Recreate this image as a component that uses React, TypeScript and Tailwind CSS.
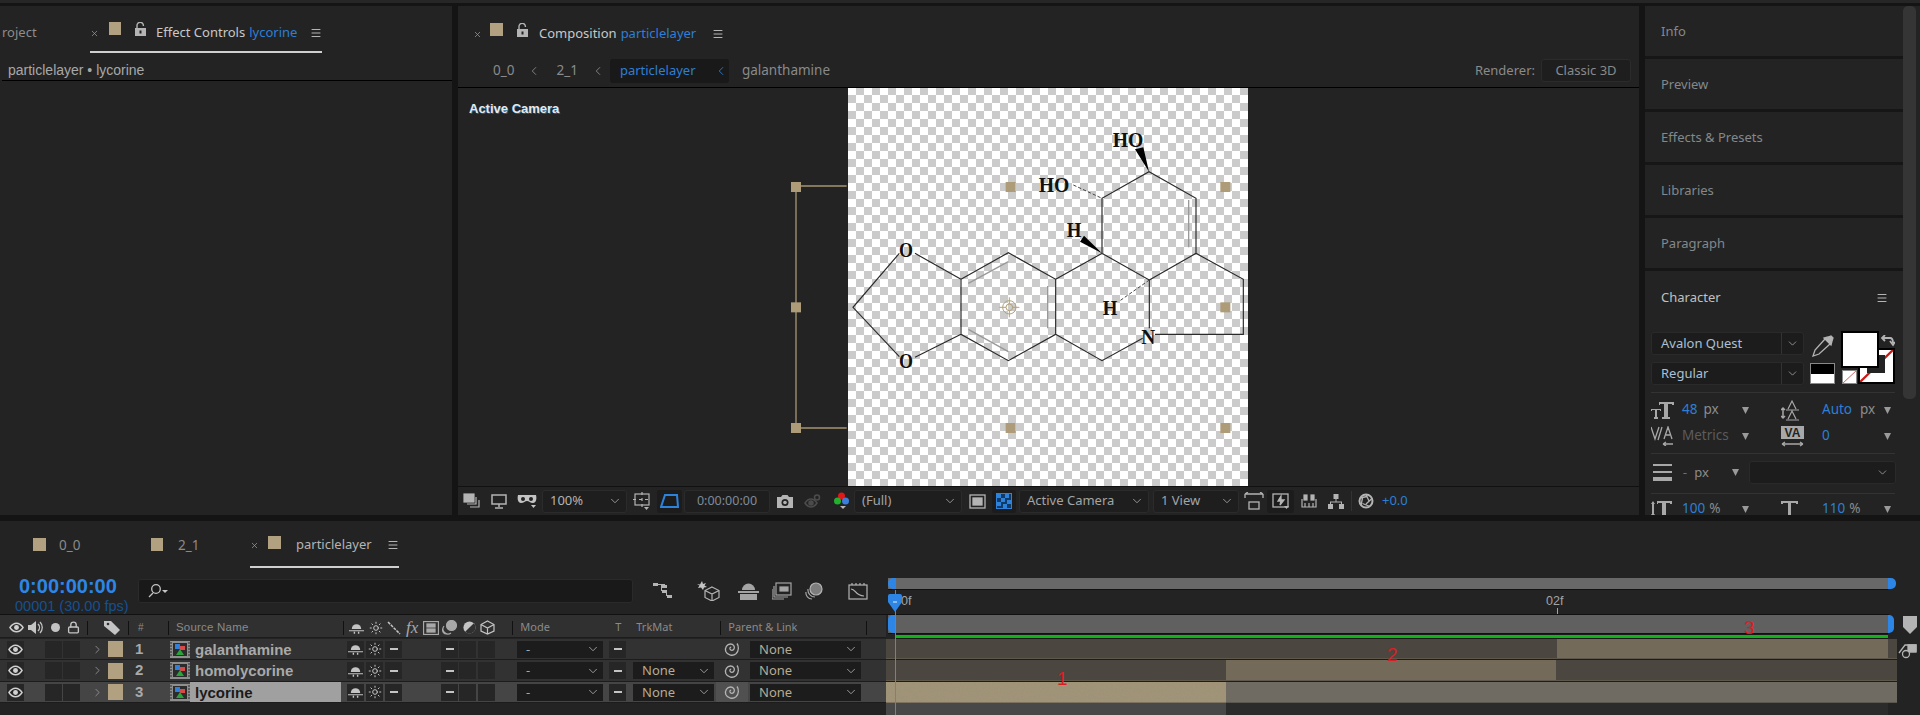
import { ChevronDown, ChevronLeft, ChevronRight, Lock, Menu, Sun, X } from 'lucide-react';

const adobe = 'font-["Noto_Sans",sans-serif]';
const arial = 'font-["Liberation_Sans",Arial,sans-serif]';

function Swatch({ className = '' }: { className?: string }) {
  return <div className={`bg-[#b2a180] shrink-0 ${className}`} />;
}

function Ham({ className = '' }: { className?: string }) {
  return <Menu size={12} strokeWidth={2} className={`text-[#b4b4b4] shrink-0 ${className}`} />;
}

function OpenLock({ className = '' }: { className?: string }) {
  return (
    <svg width="11" height="15" viewBox="0 0 11 15" className={`shrink-0 ${className}`}>
      <path d="M2 6V3.500a3.200 3.200 0 0 1 6.400 0V4" fill="none" stroke="#b4b4b4" strokeWidth="1.400" />
      <rect x="0" y="6" width="11" height="8" fill="#b4b4b4" />
      <rect x="4.500" y="8.500" width="2" height="3" fill="#232323" />
    </svg>
  );
}

function Tri({ className = '' }: { className?: string }) {
  return (
    <svg width="9" height="9" viewBox="0 0 9 9" className={`shrink-0 ${className}`}>
      <path d="M1 1h7L4.500 8z" fill="#9a9a9a" />
    </svg>
  );
}

function EyeIcon({ size = 15 }: { size?: number }) {
  return (
    <svg width={size} height={size} viewBox="0 0 16 16">
      <path d="M1 8c2-3 4.400-4.500 7-4.500S13 5 15 8c-2 3-4.400 4.500-7 4.500S3 11 1 8z" fill="none" stroke="#d0d0d0" strokeWidth="1.500" />
      <circle cx="8" cy="8" r="2.600" fill="#d0d0d0" />
    </svg>
  );
}

function ShyIcon() {
  return (
    <svg width="15" height="14" viewBox="0 0 16 14" fill="#c4c4c4">
      <path d="M3 8a5 5 0 0 1 10 0z" />
      <path d="M0 9.500h16v1H0zM5 11h1.500v2H5zM9.500 11H11v2H9.500z" />
    </svg>
  );
}

function CompIcon() {
  return (
    <svg width="20" height="17" viewBox="0 0 20 17" className="shrink-0">
      <rect x="0" y="0" width="20" height="17" fill="#8f8f8f" />
      <rect x="3" y="2" width="14" height="13" fill="#2c2c2c" />
      <path d="M0 2h2M0 5h2M0 8h2M0 11h2M0 14h2M18 2h2M18 5h2M18 8h2M18 11h2M18 14h2" stroke="#2c2c2c" strokeWidth="1" />
      <rect x="5" y="3" width="5" height="5" fill="#2f80d8" />
      <rect x="10" y="5" width="5" height="4" fill="#d84a4a" />
      <path d="M6 14l4-6 4 6z" fill="#29a33a" />
    </svg>
  );
}

function Spiral() {
  return (
    <svg width="16" height="16" viewBox="0 0 16 16" fill="none" stroke="#b4b4b4" strokeWidth="1.300" className="shrink-0">
      <path d="M13 2.500C15 5 15 10 12 12.800 9 15.300 3.500 14.500 1.800 10.500.5 7 3 3 6.500 3c3 0 4.500 2.500 3.600 4.800C9.300 9.800 6.600 9.800 6 8c-.3-1 .3-1.800 1.200-1.800" />
    </svg>
  );
}

function SmallBox({ children, className = '' }: { children?: React.ReactNode; className?: string }) {
  return (
    <div className={`w-[17px] h-[17px] bg-[#262626] flex items-center justify-center shrink-0 ${className}`}>
      {children}
    </div>
  );
}

function Dash() {
  return <div className="w-[8px] h-[2px] bg-[#c4c4c4]" />;
}

function RowSelect({ label, className = '', muted = false }: { label: string; className?: string; muted?: boolean }) {
  return (
    <div className={`h-[17px] bg-[#1c1c1c] flex items-center justify-between pl-[9px] pr-[3px] shrink-0 ${className}`}>
      <span className={`${adobe} ${muted ? 'text-[#a8a8a8]' : 'text-[#b7ab92]'} text-[13px] leading-none`}>{label}</span>
      <ChevronDown size={14} strokeWidth={1.500} className="text-[#a8a8a8]" />
    </div>
  );
}

const layers = [
  { num: '1', name: 'galanthamine', trk: false },
  { num: '2', name: 'homolycorine', trk: true },
  { num: '3', name: 'lycorine', trk: true, selected: true },
];

function LayerRow({ num, name, trk, selected }: { num: string; name: string; trk: boolean; selected?: boolean }) {
  return (
    <div className={`flex items-center ${num === '2' ? 'h-[22px]' : 'h-[21px]'} border-b border-[#1c1c1c] ${selected ? 'bg-[#454545]' : 'bg-[#323232]'}`}>
      <SmallBox className="ml-[7px]"><EyeIcon /></SmallBox>
      <SmallBox className="ml-[21px]" />
      <SmallBox className="ml-[1px]" />
      <ChevronRight size={13} strokeWidth={1.500} className="ml-[11px] text-[#9a9a9a] shrink-0" />
      <Swatch className="w-[15px] h-[16px] ml-[4px]" />
      <span className={`${arial} w-[47px] pl-[12px] font-bold text-[15px] text-[#a9a9a9] shrink-0`}>{num}</span>
      <CompIcon />
      <div className={`flex items-center w-[151px] h-[20px] shrink-0 pl-[5px] ${selected ? 'bg-[#a0a0a0]' : ''}`}>
        <span className={`${arial} font-bold text-[15px] leading-none ${selected ? 'text-[#1a1a1a]' : 'text-[#a9a9a9]'}`}>{name}</span>
      </div>
      <SmallBox className="ml-[6px]"><ShyIcon /></SmallBox>
      <SmallBox className="ml-[2px]"><Sun size={14} strokeWidth={1.700} className="text-[#c4c4c4]" /></SmallBox>
      <SmallBox className="ml-[2px]"><Dash /></SmallBox>
      <SmallBox className="ml-[39px]"><Dash /></SmallBox>
      <SmallBox className="ml-[1px]" />
      <SmallBox className="ml-[2px]" />
      <RowSelect label="-" muted className="w-[86px] ml-[22px]" />
      <SmallBox className="ml-[6px]"><Dash /></SmallBox>
      {trk ? <RowSelect label="None" className="w-[81px] ml-[7px]" /> : <div className="w-[81px] ml-[7px] shrink-0" />}
      <div className={`w-[32px] ml-[2px] h-[20px] flex items-center justify-center shrink-0 ${selected ? 'bg-[#505050]' : ''}`}>
        <Spiral />
      </div>
      <RowSelect label="None" className="w-[111px] ml-[2px]" />
    </div>
  );
}

function Bar({ w, tone }: { w: string; tone: 'dark' | 'mid' | 'pale' | 'sel' }) {
  const tones = {
    dark: 'bg-[#4b4740] border-[#5d574c]',
    mid: 'bg-[#736a5a] border-[#5d574c]',
    pale: 'bg-[#6f6b62] border-[#5a5750]',
    sel: 'bg-[#a29578] border-[#7d7360]',
  };
  return (
    <div className={`h-full border-b overflow-hidden ${w} ${w === 'flex-1' ? '' : 'shrink-0'} ${tones[tone]}`}>
      {tone === 'sel' && (
        // the selected layer's bar shows a grainy thumbnail strip
        <svg width="100%" height="100%">
          <filter id="grain">
            <feTurbulence type="fractalNoise" baseFrequency="0.7" numOctaves="2" />
            <feColorMatrix values="0 0 0 0 0.3  0 0 0 0 0.26  0 0 0 0 0.18  0 0 0 0.6 -0.1" />
          </filter>
          <rect width="100%" height="100%" filter="url(#grain)" />
        </svg>
      )}
    </div>
  );
}

function Molecule() {
  const bonds = 'M358 490L219 652L358 800M405 490L543 568M405 802L543 733M543 568L685 488L827 568L827 733L685 812L543 733Z' +
    'M827 568L966 490L1108 570L1108 715M1088 745L966 812L827 733M966 490L966 325L1107 245L1248 325L1248 490L1108 570' +
    'M1248 490L1390 568L1390 733L1125 733';
  const labels: [string, number, number, number][] = [
    ['HO', 1044, 170, 92],
    ['HO', 822, 307, 92],
    ['H', 882, 440, 44],
    ['H', 990, 675, 44],
    ['O', 378, 500, 42],
    ['O', 378, 835, 42],
    ['N', 1105, 762, 42],
  ];
  const handles = [[48, 291], [692, 291], [1336, 291], [48, 652], [1336, 652], [48, 1014], [692, 1014], [1336, 1014]];
  return (
    <svg viewBox="0 -6 1440 1194" className="absolute left-[322px] top-0 w-[480px] h-[398px]">
      <path d="M48 291V1014M48 288H200M48 1014H200" stroke="#a6946f" strokeWidth="4" fill="none" />
      <path d={bonds} stroke="#2a2a2a" strokeWidth="3.500" fill="none" />
      <path d="M565 580L685 515M803 588V715M565 718L685 785M1226 330V472" stroke="#999" strokeWidth="4" fill="none" />
      <path d="M880 285L966 325M1108 570L1020 632" stroke="#444" strokeWidth="3" strokeDasharray="10 6" fill="none" />
      <path d="M1107 245L1065 178L1090 172ZM966 490L900 455L912 437Z" fill="#000" />
      {labels.map(([t, x, y, len], i) => (
        <text key={i} x={x} y={y} textAnchor="middle" textLength={len} lengthAdjust="spacingAndGlyphs" fontFamily="Liberation Serif, serif" fontWeight="700" fontSize="66" fill="#111">{t}</text>
      ))}
      {handles.map(([x, y], i) => (
        <rect key={i} x={x - 15} y={y - 15} width="30" height="30" fill="#ae9c78" />
      ))}
      <g stroke="#b3a07a" strokeWidth="3" fill="none">
        <circle cx="688" cy="652" r="20" />
        <circle cx="688" cy="652" r="10" />
        <path d="M688 622V642M688 662V682M658 652H678M698 652H718" />
      </g>
    </svg>
  );
}

function ToolIcon({ children, className = '' }: { children: React.ReactNode; className?: string }) {
  return <div className={`flex items-center justify-center shrink-0 ${className}`}>{children}</div>;
}

function ToolSelect({ label, className = '', textClass = 'text-[#a4a4a4]' }: { label: string; className?: string; textClass?: string }) {
  return (
    <div className={`h-[23px] bg-[#1e1e1e] border border-[#2b2b2b] rounded-[3px] flex items-center justify-between pl-[7px] pr-[4px] shrink-0 ${className}`}>
      <span className={`${adobe} text-[13px] ${textClass}`}>{label}</span>
      <ChevronDown size={14} strokeWidth={1.500} className="text-[#a4a4a4]" />
    </div>
  );
}

function Toolbar() {
  return (
    <div className="h-[29px] border-t border-[#111] bg-[#232323] flex items-center pl-[5px]">
      <ToolIcon className="w-[18px]">
        <svg width="18" height="16" viewBox="0 0 18 16" fill="none" stroke="#b4b4b4" strokeWidth="1.200">
          <rect x="1" y="1" width="10" height="8" fill="#b4b4b4" />
          <path d="M13 4v7H4M16 7v7H7" />
        </svg>
      </ToolIcon>
      <ToolIcon className="w-[16px] ml-[10px]">
        <svg width="16" height="15" viewBox="0 0 16 15" fill="none" stroke="#b4b4b4" strokeWidth="1.500">
          <rect x="1" y="1" width="14" height="9" />
          <path d="M8 10v3M4 14h8" />
        </svg>
      </ToolIcon>
      <ToolIcon className="w-[20px] ml-[10px]">
        <svg width="20" height="16" viewBox="0 0 20 16">
          <path d="M1 2h18c1 4 0 8-3 8-3 0-4-2-6-2s-3 2-6 2C1 10 0 6 1 2z" fill="#c4c4c4" />
          <circle cx="6" cy="6" r="2" fill="#232323" />
          <circle cx="14" cy="6" r="2" fill="#232323" />
          <path d="M14 12h5l-2.500 3z" fill="#c4c4c4" />
        </svg>
      </ToolIcon>
      <ToolSelect label="100%" className="w-[85px] ml-[5px]" textClass="text-[#b4b4b4]" />
      <ToolIcon className="w-[18px] ml-[6px]">
        <svg width="18" height="18" viewBox="0 0 18 18" fill="none" stroke="#b4b4b4" strokeWidth="1.200">
          <rect x="2" y="2" width="14" height="11" />
          <path d="M0 7.500h18M9 0v16" strokeDasharray="3 3" />
          <path d="M11 15h5l-2.500 3z" fill="#b4b4b4" stroke="none" />
        </svg>
      </ToolIcon>
      <ToolIcon className="w-[25px] h-[23px] ml-[6px] bg-[#1c1c1c] rounded-[3px]">
        <svg width="19" height="18" viewBox="0 0 19 18" fill="none" stroke="#2d82dc" strokeWidth="2">
          <path d="M5 3h12l1 12H1z" />
        </svg>
      </ToolIcon>
      <div className="w-[86px] h-[23px] ml-[2px] bg-[#1e1e1e] border border-[#2b2b2b] rounded-[3px] flex items-center justify-center shrink-0">
        <span className={`${adobe} text-[12.500px] text-[#7f8a99]`}>0:00:00:00</span>
      </div>
      <ToolIcon className="w-[18px] ml-[6px]">
        <svg width="18" height="15" viewBox="0 0 18 15">
          <path d="M1 3h4l1.500-2h5L13 3h4v11H1z" fill="#b4b4b4" />
          <circle cx="9" cy="8.500" r="3.500" fill="#232323" />
          <circle cx="9" cy="8.500" r="1.800" fill="#b4b4b4" />
        </svg>
      </ToolIcon>
      <ToolIcon className="w-[17px] ml-[10px]">
        <svg width="17" height="15" viewBox="0 0 17 15" fill="none" stroke="#4c4c4c" strokeWidth="1.500">
          <path d="M1 9c2-3 4-4 6-4s4 1 6 4c-2 3-4 4-6 4s-4-1-6-4z" />
          <circle cx="7" cy="9" r="2" fill="#4c4c4c" />
          <circle cx="13" cy="3.500" r="2.500" />
        </svg>
      </ToolIcon>
      <ToolIcon className="w-[15px] ml-[13px]">
        <svg width="15" height="18" viewBox="0 0 15 18">
          <circle cx="7.500" cy="4" r="3.500" fill="#e01818" />
          <circle cx="3.500" cy="9" r="3.500" fill="#22b02e" />
          <circle cx="11.500" cy="9" r="3.500" fill="#3b7fdc" />
          <path d="M6 14h6l-3 3z" fill="#b4b4b4" />
        </svg>
      </ToolIcon>
      <ToolSelect label="(Full)" className="w-[108px] ml-[5px]" />
      <ToolIcon className="w-[17px] ml-[7px]">
        <svg width="17" height="15" viewBox="0 0 17 15" fill="none" stroke="#b4b4b4" strokeWidth="1.300">
          <rect x="1" y="1" width="15" height="13" />
          <rect x="4" y="4" width="9" height="7" fill="#b4b4b4" />
        </svg>
      </ToolIcon>
      <ToolIcon className="w-[24px] h-[23px] ml-[6px] bg-[#1c1c1c] rounded-[3px]">
        <svg width="16" height="16" viewBox="0 0 16 16">
          <rect x="0.500" y="0.500" width="15" height="15" fill="#123a66" stroke="#2d82dc" />
          <path d="M1 1h4v4H1zM9 1h4v4H9zM5 5h4v4H5zM11 7h4v4h-4zM1 9h4v4H1zM7 11h4v4H7z" fill="#2d82dc" />
        </svg>
      </ToolIcon>
      <ToolSelect label="Active Camera" className="w-[130px] ml-[3px]" />
      <ToolSelect label="1 View" className="w-[86px] ml-[4px]" />
      <ToolIcon className="w-[20px] ml-[5px]">
        <svg width="20" height="18" viewBox="0 0 20 18" fill="none" stroke="#b4b4b4" strokeWidth="1.300">
          <path d="M1 2h18M1 2l3-2M19 2l-3-2" />
          <path d="M1 2v4M19 2v4" />
          <rect x="5" y="10" width="10" height="7" />
        </svg>
      </ToolIcon>
      <ToolIcon className="w-[27px] h-[23px] ml-[3px] bg-[#1c1c1c] rounded-[3px]">
        <svg width="18" height="17" viewBox="0 0 18 17" fill="none" stroke="#b4b4b4" strokeWidth="1.300">
          <rect x="1" y="1" width="15" height="13" />
          <path d="M9 3L6 8h3l-1 4 4-5H9z" fill="#b4b4b4" />
          <path d="M12 13h5l-2.500 3z" fill="#b4b4b4" stroke="none" />
        </svg>
      </ToolIcon>
      <ToolIcon className="w-[16px] ml-[7px]">
        <svg width="16" height="15" viewBox="0 0 16 15" fill="none" stroke="#b4b4b4" strokeWidth="1.200">
          <path d="M1 5v8h14V5M4 13V9M8 13V9M12 13V9" />
          <rect x="3" y="1" width="3" height="5" fill="#b4b4b4" />
          <rect x="10" y="1" width="3" height="5" fill="#b4b4b4" />
        </svg>
      </ToolIcon>
      <ToolIcon className="w-[16px] ml-[11px]">
        <svg width="16" height="15" viewBox="0 0 16 15" fill="#b4b4b4">
          <rect x="5.500" y="0" width="5" height="5" />
          <rect x="0" y="10" width="5" height="5" />
          <rect x="11" y="10" width="5" height="5" />
          <path d="M7.500 5h1v2.500h5.500V10h-1V8.500H3V10H2V7.500h5.500z" />
        </svg>
      </ToolIcon>
      <div className="w-px h-[20px] bg-[#333] ml-[7px] shrink-0" />
      <ToolIcon className="w-[16px] ml-[6px]">
        <svg width="16" height="16" viewBox="0 0 16 16" fill="none" stroke="#b4b4b4">
          <circle cx="8" cy="8" r="6.500" strokeWidth="2" />
          <path d="M8 1.500L11 8M14 5.500L8 11M12 13.500L4.500 10.500M3 12.500L4.500 5M2 5L9 3.500" strokeWidth="1.300" />
        </svg>
      </ToolIcon>
      <span className={`${adobe} text-[13px] text-[#2d7fd6] ml-[8px]`}>+0.0</span>
    </div>
  );
}

function ParamRow({ top, left, leftVal, right, rightVal }: { top: string; left: React.ReactNode; leftVal: React.ReactNode; right: React.ReactNode; rightVal: React.ReactNode }) {
  return (
    <div className={`flex items-center h-[22px] ${top} ${adobe} text-[13.500px] leading-none`}>
      <div className="w-[31px] shrink-0">{left}</div>
      <div className="w-[59px] shrink-0 whitespace-nowrap">{leftVal}</div>
      <Tri />
      <div className="w-[31px] ml-[31px] shrink-0 flex justify-start">{right}</div>
      <div className="w-[61px] ml-[10px] shrink-0 whitespace-nowrap">{rightVal}</div>
      <Tri />
    </div>
  );
}

function CharacterPanel() {
  return (
    <div className="pl-[6px] w-[251px]">
      <div className="relative h-[60px] pt-[8px]">
        <div className="flex flex-col gap-[7px] w-[153px]">
          {['Avalon Quest', 'Regular'].map((f) => (
            <div key={f} className="h-[23px] bg-[#1c1c1c] border border-[#2a2a2a] rounded-[3px] flex items-center">
              <span className={`${adobe} flex-1 pl-[9px] text-[13px] text-[#a9c0d8]`}>{f}</span>
              <div className="w-[22px] h-full border-l border-[#333] flex items-center justify-center">
                <ChevronDown size={13} strokeWidth={1.500} className="text-[#a4a4a4]" />
              </div>
            </div>
          ))}
        </div>
        <svg width="22" height="22" viewBox="0 0 22 22" className="absolute left-[161px] top-[11px]" fill="none" stroke="#b4b4b4" strokeWidth="1.300">
          <path d="M13 4L3 15l-2 6 6-2L18 9" />
          <path d="M12 3l7 7 1-4 1-3-2-2-3 1z" fill="#b4b4b4" />
        </svg>
        <div className="absolute left-[159px] top-[39px] w-[25px] h-[21px] flex flex-col border border-[#888]">
          <div className="flex-1 bg-black" />
          <div className="flex-1 bg-white" />
        </div>
        <div className="absolute left-[191px] top-[46px] w-[15px] h-[14px] bg-white border border-[#888]">
          <svg viewBox="0 0 15 14" className="w-full h-full"><path d="M0 14L15 0" stroke="#c44" strokeWidth="1" /></svg>
        </div>
        <div className="absolute left-[207px] top-[24px] w-[37px] h-[36px] bg-white border-[2px] border-black overflow-hidden">
          <svg viewBox="0 0 37 36" className="w-full h-full"><path d="M0 36L37 0" stroke="#d01515" strokeWidth="2.500" /></svg>
        </div>
        <div className="absolute left-[216px] top-[31px] w-[18px] h-[18px] bg-[#232323]" />
        <div className="absolute left-[190px] top-[7px] w-[38px] h-[37px] bg-white border-[2px] border-black" />
        <svg width="15" height="14" viewBox="0 0 15 14" className="absolute left-[229px] top-[11px]" fill="none" stroke="#b4b4b4" strokeWidth="1.800">
          <path d="M2 3h8c2 0 3 2 3 5M10 6l3 4 2-3M5 0L2 3l3 3" />
        </svg>
      </div>
      <div className="h-px bg-[#333] mt-[8px] w-[244px]" />
      <div className="flex flex-col">
        <ParamRow
          top="mt-[6px]"
          left={<svg width="23" height="18" viewBox="0 0 23 18" fill="#a8a8a8"><path d="M8 1h15v3h-2V3h-4v13h2v2H11v-2h2V3H9v1H8zM0 8h10v2H9V9H6v7h1v2H3v-2h1V9H1v1H0z" /></svg>}
          leftVal={<><span className="text-[#2d7fd6]">48</span><span className="text-[#8c8c8c] ml-[6px]">px</span></>}
          right={<svg width="20" height="22" viewBox="0 0 20 22" fill="none" stroke="#a8a8a8" strokeWidth="1.200"><path d="M7 10l4-8 4 8M5 11h13M7 20l4-8 4 8M5 21h13" /><path d="M2 9v10M0 11l2-2 2 2M0 17l2 2 2-2" strokeWidth="1.500" /></svg>}
          rightVal={<><span className="text-[#2d7fd6]">Auto</span><span className="text-[#8c8c8c] ml-[8px]">px</span></>}
        />
        <ParamRow
          top="mt-[4px]"
          left={<svg width="23" height="20" viewBox="0 0 23 20" fill="none" stroke="#a8a8a8" strokeWidth="1.300"><path d="M0 1l4 12 4-12M7 14L11 1M13 13l4-12 4 12M15 9h4M12 18h10M12 18l3-2M12 18l3 2" /></svg>}
          leftVal={<span className="text-[#5c5c5c]">Metrics</span>}
          right={<svg width="23" height="21" viewBox="0 0 23 21"><rect width="23" height="13" fill="#a8a8a8" /><text x="11.500" y="11" textAnchor="middle" fontFamily="Liberation Sans, sans-serif" fontWeight="700" fontSize="12" fill="#222">VA</text><path d="M1 18h21M1 18l3-2M1 18l3 2M22 18l-3-2M22 18l-3 2" stroke="#a8a8a8" strokeWidth="1.300" fill="none" /></svg>}
          rightVal={<span className="text-[#2d7fd6]">0</span>}
        />
        <div className="h-px bg-[#333] mt-[6px] w-[244px]" />
        <div className="flex items-center mt-[7px] h-[23px] w-[245px]">
          <svg width="19" height="17" viewBox="0 0 19 17" fill="#a8a8a8" className="ml-[2px] shrink-0"><path d="M0 0h19v2H0zM0 7h19v2H0zM0 13h19v4H0z" /></svg>
          <span className={`${adobe} text-[13px] text-[#8c8c8c] ml-[11px] w-[50px]`}><span className="text-[#2d7fd6]">-</span><span className="ml-[7px]">px</span></span>
          <Tri className="ml-[-2px]" />
          <div className="ml-[9px] flex-1 h-full bg-[#1c1c1c] border border-[#2a2a2a] rounded-[3px] flex items-center justify-end pr-[6px]">
            <ChevronDown size={13} strokeWidth={1.500} className="text-[#a4a4a4]" />
          </div>
        </div>
        <div className="h-px bg-[#333] mt-[9px] w-[244px]" />
        <ParamRow
          top="mt-[4px]"
          left={<svg width="23" height="18" viewBox="0 0 23 18" fill="#a8a8a8"><path d="M6 1h15v3h-2V3h-4v13h2v2H9v-2h2V3H7v1H6zM2 1l2 3H3v10h1l-2 3-2-3h1V4H0z" /></svg>}
          leftVal={<><span className="text-[#2d7fd6]">100</span><span className="text-[#8c8c8c] ml-[4px]">%</span></>}
          right={<svg width="17" height="18" viewBox="0 0 17 18" fill="#a8a8a8"><path d="M0 1h17v3h-2V3h-5v13h2v2H5v-2h2V3H2v1H0z" /></svg>}
          rightVal={<><span className="text-[#2d7fd6]">110</span><span className="text-[#8c8c8c] ml-[4px]">%</span></>}
        />
      </div>
    </div>
  );
}

function Header() {
  return (
    <div className="h-[23px] pt-[3px] bg-[#303030] border-b border-[#1c1c1c] flex items-center relative">
      <div className="ml-[9px]"><EyeIcon /></div>
      <svg width="16" height="15" viewBox="0 0 16 15" className="ml-[4px] shrink-0" fill="#c4c4c4"><path d="M0 5h3l5-4v13l-5-4H0z" /><path d="M10 4c2 2 2 5 0 7M12 2c3 3 3 8 0 11" stroke="#c4c4c4" fill="none" strokeWidth="1.300" /></svg>
      <div className="w-[9px] h-[9px] rounded-full bg-[#c4c4c4] ml-[7px] shrink-0" />
      <Lock size={13} strokeWidth={2.500} className="text-[#c4c4c4] ml-[7px] shrink-0" />
      <div className="w-px h-[14px] bg-[#111] ml-[7px] shrink-0" />
      <svg width="16" height="15" viewBox="0 0 16 15" className="ml-[16px] shrink-0" fill="#c4c4c4"><path d="M0 1h7l9 9-5 5-11-9z" /><circle cx="4" cy="4" r="1.300" fill="#303030" /></svg>
      <div className="w-px h-[14px] bg-[#111] ml-[8px] shrink-0" />
      <span className={`${arial} text-[10px] text-[#8a8a8a] ml-[9px] w-[23px] shrink-0`}>#</span>
      <div className="w-px h-[14px] bg-[#111] ml-[7px] shrink-0" />
      <span className={`${arial} text-[11.500px] text-[#8a8a8a] ml-[7px] w-[167px] tracking-[0.2px] shrink-0`}>Source Name</span>
      <div className="w-px h-[14px] bg-[#111] shrink-0" />
      <div className="ml-[5px] shrink-0"><ShyIcon /></div>
      <Sun size={14} strokeWidth={1.700} className="text-[#c4c4c4] ml-[5px] shrink-0" />
      <svg width="14" height="14" viewBox="0 0 14 14" className="ml-[4px] shrink-0"><path d="M1 1l12 12" stroke="#c4c4c4" strokeWidth="1.500" strokeDasharray="3 1" /></svg>
      <span className='font-["Liberation_Serif",serif] italic text-[17px] leading-none text-[#a8a8a8] ml-[5px] shrink-0'>fx</span>
      <svg width="16" height="14" viewBox="0 0 16 14" className="ml-[5px] shrink-0" fill="none" stroke="#a8a8a8" strokeWidth="1.300"><rect x="0.500" y="0.500" width="15" height="13" /><rect x="4" y="3" width="8" height="3" fill="#a8a8a8" /><rect x="4" y="8" width="8" height="3" fill="#a8a8a8" /></svg>
      <svg width="15" height="15" viewBox="0 0 15 15" className="ml-[3px] shrink-0" fill="none" stroke="#a8a8a8" strokeWidth="1.200"><circle cx="9.500" cy="5.500" r="5" fill="#a8a8a8" /><path d="M2 6a5 5 0 0 0 7 7M0.700 9a4 4 0 0 0 4 5" /></svg>
      <svg width="13" height="13" viewBox="0 0 15 15" className="ml-[6px] shrink-0"><circle cx="7.500" cy="7.500" r="7" fill="#c4c4c4" /><path d="M12.500 2.500a7 7 0 0 1-10 10z" fill="#303030" /></svg>
      <svg width="15" height="15" viewBox="0 0 15 15" className="ml-[4px] shrink-0" fill="none" stroke="#c4c4c4" strokeWidth="1.200"><path d="M7.500 1L14 4.500v6.500L7.500 14 1 11V4.500zM1 4.500l6.500 3.500L14 4.500M7.500 8v6" /></svg>
      <div className="w-px h-[14px] bg-[#111] ml-[17px] shrink-0" />
      <span className={`${adobe} text-[11px] text-[#8a8a8a] ml-[7px] w-[95px] shrink-0`}>Mode</span>
      <span className={`${adobe} text-[11px] text-[#8a8a8a] w-[21px] shrink-0`}>T</span>
      <span className={`${adobe} text-[11px] text-[#8a8a8a] w-[84px] shrink-0`}>TrkMat</span>
      <div className="w-px h-[14px] bg-[#111] shrink-0" />
      <span className={`${adobe} text-[11px] text-[#8a8a8a] ml-[7px] w-[138px] shrink-0`}>Parent &amp; Link</span>
      <div className="w-px h-[14px] bg-[#111] shrink-0" />
    </div>
  );
}

export default function App() {
  const panels = ['Info', 'Preview', 'Effects & Presets', 'Libraries', 'Paragraph'];
  return (
    <div className="w-[1920px] h-[715px] bg-[#141414] overflow-hidden flex flex-col">
      <div className="h-[3px] bg-[#262626] shrink-0" />
      <div className="h-[3px] shrink-0" />

      <div className="h-[509px] flex shrink-0 gap-[6px]">
        {/* effect controls */}
        <div className="w-[452px] bg-[#232323] shrink-0">
          <div className={`h-[48px] flex ${adobe} text-[13px]`}>
            <span className="w-[90px] pl-[2px] pt-[17px] text-[#8c8c8c]">roject</span>
            <div className="w-[232px] h-[47px] border-b-[2px] border-[#cfcfcf] flex items-center pt-[9px]">
              <X size={9} strokeWidth={2} className="text-[#999] shrink-0" />
              <Swatch className="w-[12px] h-[13px] ml-[10px] mt-[-9px]" />
              <OpenLock className="ml-[14px] mt-[-8px]" />
              <span className="ml-[10px] text-[#c8c8c8] whitespace-nowrap">Effect Controls</span>
              <span className="ml-[4px] text-[#2d7fd6]">lycorine</span>
              <Ham className="ml-auto" />
            </div>
          </div>
          <div className="h-[27px] ml-[2px] border-b border-black flex items-center pl-[6px] pt-[6px]">
            <span className={`${arial} text-[14px] text-[#a8a8a8]`}>particlelayer • lycorine</span>
          </div>
        </div>

        {/* composition */}
        <div className="w-[1181px] bg-[#232323] shrink-0 flex flex-col">
          <div className={`h-[48px] flex items-center pt-[8px] pl-[15px] ${adobe} text-[13px]`}>
            <X size={9} strokeWidth={2} className="text-[#999] shrink-0" />
            <Swatch className="w-[13px] h-[13px] ml-[8px] mt-[-9px]" />
            <OpenLock className="ml-[14px] mt-[-8px]" />
            <span className="ml-[11px] text-[#c8c8c8]">Composition</span>
            <span className="ml-[4px] text-[#2d7fd6]">particlelayer</span>
            <Ham className="ml-[16px]" />
          </div>
          <div className={`h-[34px] flex items-center pl-[35px] pr-[8px] border-b border-black ${adobe} text-[13.500px] text-[#8a8a8a]`}>
            <span>0_0</span>
            <ChevronLeft size={14} strokeWidth={1.500} className="ml-[13px]" />
            <span className="ml-[15px]">2_1</span>
            <ChevronLeft size={14} strokeWidth={1.500} className="ml-[13px]" />
            <div className="ml-[5px] w-[119px] h-[24px] bg-[#191919] rounded-[3px] flex items-center pl-[10px] text-[#2d7fd6] text-[13px]">
              <span>particlelayer</span>
              <ChevronLeft size={14} strokeWidth={1.500} className="ml-auto mr-[1px]" />
            </div>
            <span className="ml-[13px]">galanthamine</span>
            <span className="ml-auto text-[13px]">Renderer:</span>
            <div className="ml-[6px] w-[90px] h-[23px] bg-[#1e1e1e] border border-[#2b2b2b] rounded-[3px] flex items-center justify-center text-[13px]">Classic 3D</div>
          </div>
          <div className="relative flex-1">
            <div className="absolute left-[390px] top-0 w-[400px] h-full bg-[repeating-conic-gradient(#cbcbcb_0_25%,#fff_0_50%)] bg-[length:16px_16px] bg-[position:0_-1px]" />
            <Molecule />
            <span className={`absolute left-[11px] top-[11px] ${arial} font-bold text-[13px] text-[#e8e8e8] [text-shadow:1px_1px_0_#1d5f8f]`}>Active Camera</span>
          </div>
          <Toolbar />
        </div>

        {/* right stack */}
        <div className="flex-1 bg-[#232323] flex overflow-hidden relative">
          <div className="flex-1">
            {panels.map((p) => (
              <div key={p} className={`h-[53px] flex items-center pl-[16px] pt-[2px] border-b-[3px] border-[#161616] ${adobe} text-[13px] text-[#82888c]`}>{p}</div>
            ))}
            <div className={`h-[53px] flex items-center pl-[16px] pr-[15px] justify-between ${adobe} text-[13px] text-[#c0c0c0]`}>
              Character
              <Ham />
            </div>
            <CharacterPanel />
          </div>
          <div className="w-[15px] mr-[2px] shrink-0">
            <div className="h-[393px] w-[13px] bg-[#353535] rounded-[5px]" />
          </div>
        </div>
      </div>

      <div className="h-[6px] shrink-0" />

      {/* timeline */}
      <div className="flex-1 bg-[#232323] flex flex-col overflow-hidden">
        <div className={`h-[47px] flex ${adobe} text-[13.500px] text-[#8a8a8a] shrink-0`}>
          <div className="w-[151px] pl-[33px] flex items-start pt-[17px] shrink-0">
            <Swatch className="w-[13px] h-[13px]" />
            <span className="ml-[13px] mt-[-3px]">0_0</span>
          </div>
          <div className="w-[99px] flex items-start pt-[17px] shrink-0">
            <Swatch className="w-[12px] h-[13px]" />
            <span className="ml-[15px] mt-[-3px]">2_1</span>
          </div>
          <div className="w-[149px] h-[47px] border-b-[2px] border-[#cfcfcf] flex items-center shrink-0 pt-[3px] text-[13px]">
            <X size={9} strokeWidth={2} className="text-[#999] shrink-0" />
            <Swatch className="w-[13px] h-[13px] ml-[9px] mt-[-5px]" />
            <span className="ml-[15px] text-[#b4b4b4]">particlelayer</span>
            <Ham className="ml-auto" />
          </div>
        </div>

        <div className="flex flex-1 min-h-0">
          {/* layer column */}
          <div className="w-[886px] shrink-0 flex flex-col">
            <div className="h-[47px] border-b-[1px] border-[#111] flex items-center shrink-0">
              <div className="w-[138px] pl-[15px] shrink-0 flex flex-col items-start pt-[8px]">
                <span className={`${arial} font-bold text-[20px] leading-[22px] text-[#2d86e6] ml-[4px]`}>0:00:00:00</span>
                <span className={`${arial} text-[14.500px] leading-[18px] text-[#17508f] whitespace-nowrap`}>00001 (30.00 fps)</span>
              </div>
              <div className="w-[495px] h-[24px] bg-[#191919] border border-[#2a2a2a] rounded-[3px] flex items-center pl-[9px] shrink-0">
                <svg width="20" height="14" viewBox="0 0 20 14" fill="none" stroke="#c4c4c4" strokeWidth="1.300">
                  <circle cx="8" cy="5" r="4.300" />
                  <path d="M5 9l-4 4" />
                  <path d="M14 6h6l-3 3z" fill="#c4c4c4" stroke="none" />
                </svg>
              </div>
              <svg width="22" height="20" viewBox="0 0 22 20" fill="#b4b4b4" className="ml-[20px] shrink-0">
                <path d="M0 2h5v3H0zM9 4h5v3H9zM9 9h5v3H9zM14 14h5v3h-5zM5 3h7v1H5zM8 3h1v7H8zM13 11h1v4h-1z" />
              </svg>
              <svg width="24" height="20" viewBox="0 0 24 20" fill="none" stroke="#b4b4b4" strokeWidth="1.200" className="ml-[21px] shrink-0">
                <path d="M6 0l1 3 3-1-1.500 2.500L11 6 8 6.500 7 9 5 6.500 2 7l1.500-2.500L1 3l3 .5z" fill="#c4c4c4" stroke="none" />
                <path d="M16 6l7 3.500v7L16 20l-7-3.500v-7zM9 9.500l7 3.500 7-3.500M16 13v7" />
              </svg>
              <svg width="21" height="17" viewBox="0 0 21 17" fill="#a4a4a4" className="ml-[18px] shrink-0">
                <path d="M4 7a6 6 0 0 1 13 0z" />
                <path d="M0 8h21v2H0zM2 11h17v6H2z" />
              </svg>
              <svg width="20" height="18" viewBox="0 0 20 18" fill="none" stroke="#a4a4a4" strokeWidth="1.200" className="ml-[13px] shrink-0">
                <rect x="4" y="1" width="15" height="12" />
                <rect x="8" y="5" width="8" height="4" fill="#a4a4a4" />
                <path d="M2 4v11h14M0 7v10h12" />
              </svg>
              <svg width="18" height="18" viewBox="0 0 18 18" fill="none" stroke="#a4a4a4" strokeWidth="1.200" className="ml-[13px] shrink-0">
                <circle cx="11" cy="7" r="6" fill="#7d7d7d" stroke="#b4b4b4" />
                <path d="M3 7a7 7 0 0 0 7 8M1 10a6 6 0 0 0 6 7" />
              </svg>
              <svg width="20" height="18" viewBox="0 0 20 18" fill="none" stroke="#b4b4b4" strokeWidth="1.200" className="ml-[25px] shrink-0">
                <rect x="1" y="3" width="18" height="14" />
                <path d="M4 1v2M8 1v2M12 1v2M16 1v2" />
                <path d="M3 7c5 0 4 7 13 7" />
              </svg>
            </div>
            <Header />
            <div className="h-[1px] shrink-0" />
            {layers.map((l) => (
              <LayerRow key={l.num} {...l} />
            ))}
          </div>

          {/* time graph */}
          <div className="flex-1 relative flex flex-col min-w-0">
            <div className="pt-[10px] h-[22px] shrink-0 pl-[2px]">
              <div className="w-[1000px] h-[12px] bg-[#686868] border-b border-[#111] relative">
                <div className="absolute left-0 top-0 w-[8px] h-[11px] bg-[#2d86e6] rounded-l-[5px]" />
                <div className="absolute right-[-8px] top-0 w-[8px] h-[11px] bg-[#2d86e6] rounded-r-[5px]" />
              </div>
            </div>
            <div className="h-[25px] shrink-0 relative border-b border-[#111] w-[1003px]">
              <span className={`absolute left-[15px] top-[2px] ${arial} text-[12.500px] text-[#a4a4a4]`}>0f</span>
              <span className={`absolute left-[660px] top-[2px] ${arial} text-[12.500px] text-[#a4a4a4]`}>02f</span>
              <div className="absolute left-[671px] bottom-0 w-px h-[6px] bg-[#a4a4a4]" />
            </div>
            <div className="h-[19px] ml-[2px] w-[1000px] bg-[#606060] border-b border-[#111] shrink-0 relative">
              <div className="absolute left-0 top-0 w-[8px] h-[18px] bg-[#2d86e6] rounded-l-[5px]" />
              <div className="absolute right-[-6px] top-0 w-[6px] h-[18px] bg-[#2d86e6] rounded-r-[5px]" />
            </div>
            <div className="h-[5px] ml-[9px] w-[993px] bg-[#14b01e] border-y border-[#1a1a1a] shrink-0" />
            <div className="w-[1011px] flex flex-col shrink-0">
              <div className="h-[21px] flex border-b border-[#1c1c1c]">
                <Bar w="w-[671px]" tone="dark" />
                <Bar w="w-[331px]" tone="mid" />
                <Bar w="flex-1" tone="dark" />
              </div>
              <div className="h-[22px] flex border-b border-[#1c1c1c]">
                <Bar w="w-[340px]" tone="dark" />
                <Bar w="w-[330px]" tone="mid" />
                <Bar w="flex-1" tone="dark" />
              </div>
              <div className="h-[21px] flex">
                <Bar w="w-[340px]" tone="sel" />
                <Bar w="flex-1" tone="pale" />
              </div>
              <div className="flex-1 flex h-[12px]">
                <div className="w-[340px] h-[12px] bg-[#484848]" />
                <div className="w-[662px] h-[12px] bg-[#2b2b2b]" />
              </div>
            </div>

            {/* playhead */}
            <div className="absolute left-[9px] top-[22px] bottom-0 w-px bg-[#3a8fe0]" />
            <svg width="16" height="19" viewBox="0 0 16 19" className="absolute left-[1px] top-[26px]">
              <path d="M1 2a2 2 0 0 1 2-2h10a2 2 0 0 1 2 2v6l-7 10-7-10z" fill="#2d86e6" />
              <path d="M6 8h4" stroke="#eee" strokeWidth="1" />
            </svg>

            {/* stray labels */}
            <span className={`absolute left-[171px] top-[101px] ${arial} text-[19px] leading-none text-[#d81f26]`}>1</span>
            <span className={`absolute left-[501px] top-[77px] ${arial} text-[19px] leading-none text-[#d81f26]`}>2</span>
            <span className={`absolute left-[858px] top-[50px] ${arial} text-[19px] leading-none text-[#d81f26]`}>3</span>

            {/* rail */}
            <svg width="15" height="19" viewBox="0 0 15 19" className="absolute left-[1017px] top-[48px]">
              <path d="M0 0h14v11l-7 7-7-7z" fill="#b4b4b4" />
            </svg>
            <svg width="19" height="18" viewBox="0 0 19 18" className="absolute left-[1012px] top-[73px]" fill="none" stroke="#b4b4b4" strokeWidth="1.300">
              <path d="M1 12l6-8h11v6H10" />
              <path d="M10 4h8v7h-8z" fill="#b4b4b4" />
              <circle cx="8" cy="13" r="3.500" fill="#232323" />
            </svg>
          </div>
        </div>
      </div>
    </div>
  );
}
